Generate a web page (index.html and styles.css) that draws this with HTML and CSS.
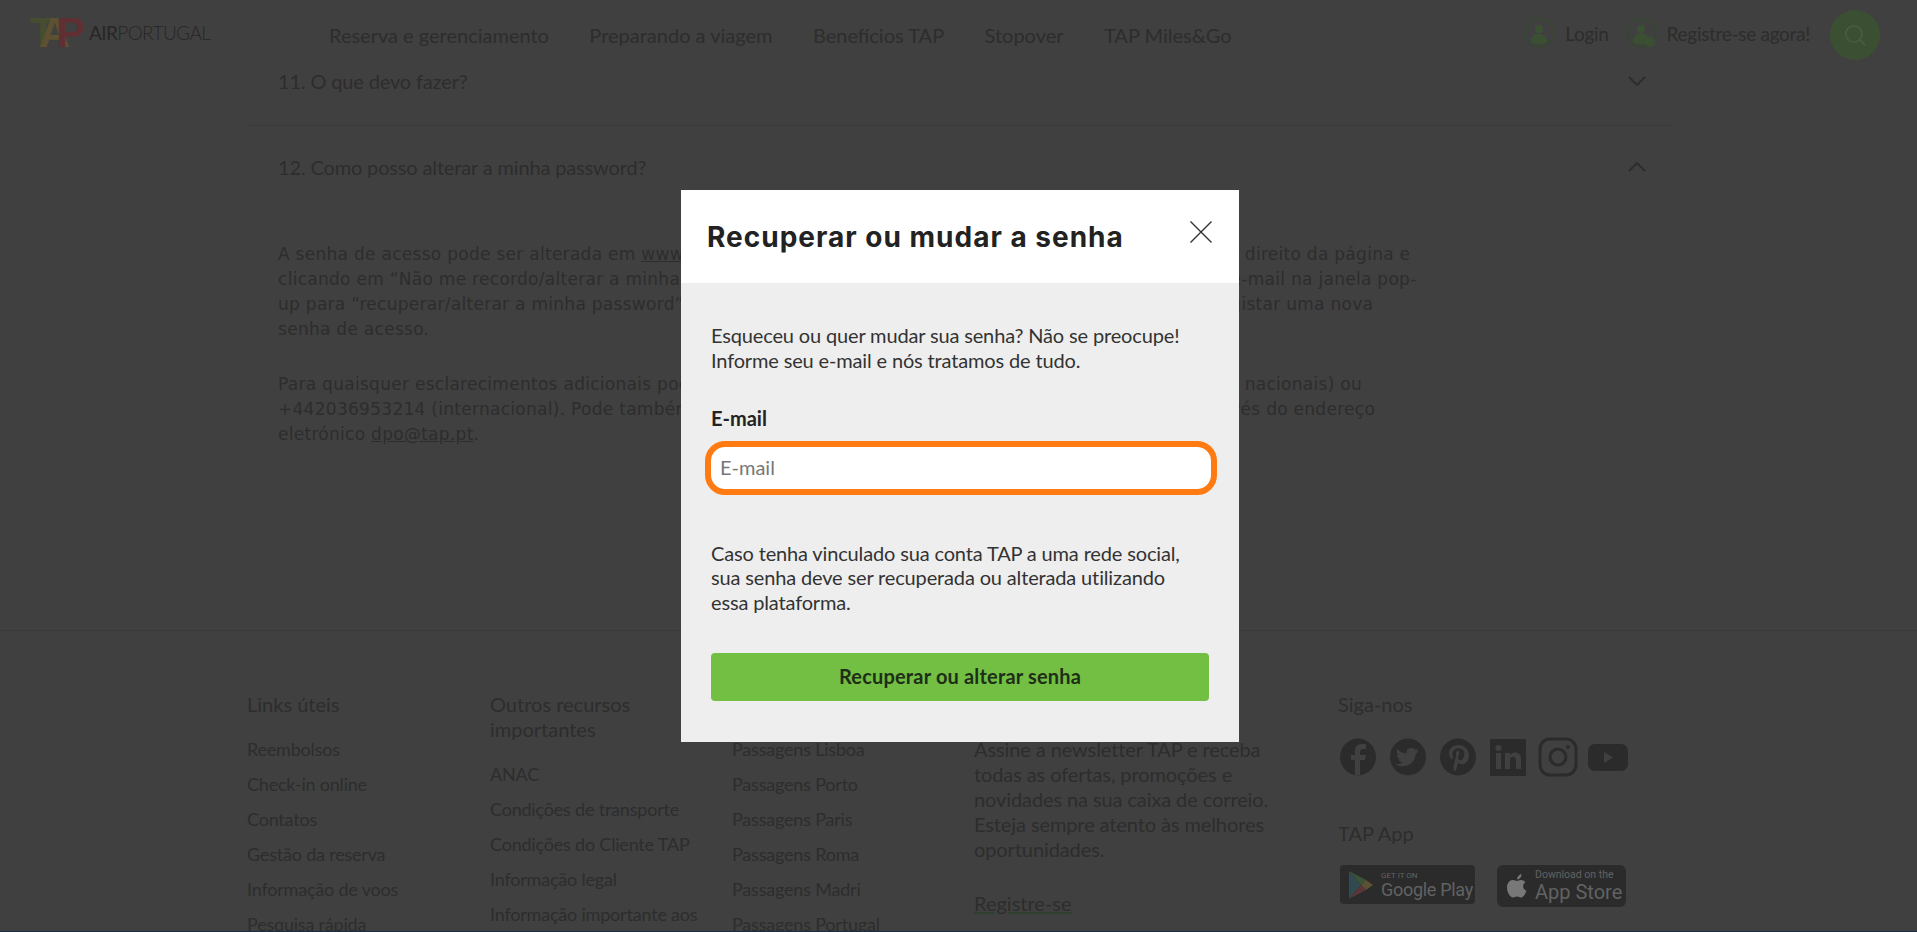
FILE: index.html
```html
<!DOCTYPE html>
<html>
  <head>
    <meta charset="utf-8" />
    <link rel="stylesheet" href="styles.css">
  </head>
  <body>
    <div class="page">
      <div class="header">
        <div class="logo">
          <div class="logo-mark"><span class="logo-t">T</span><span class="logo-a">A</span><span class="logo-p">P</span></div>
          <div class="logo-text"><b>AIR</b>PORTUGAL</div>
        </div>
        <div class="nav">
          <span>Reserva e gerenciamento</span>
          <span>Preparando a viagem</span>
          <span>Benefícios TAP</span>
          <span>Stopover</span>
          <span>TAP Miles&amp;Go</span>
        </div>
        <div class="user-links">
          <div class="user-link">
            <svg class="user-icon" viewBox="0 0 30 30">
              <circle cx="15" cy="15" r="14.2" fill="none" stroke="#35482f" stroke-width="1.4" />
              <circle cx="15" cy="11" r="4" fill="#3b5033" />
              <path d="M7 24c0-6 3-8 8-8s8 2 8 8c-2 3-14 3-16 0z" fill="#3b5033" />
            </svg>
            <span>Login</span>
          </div>
          <div class="user-link">
            <svg class="user-icon" viewBox="0 0 30 30">
              <circle cx="15" cy="15" r="14.2" fill="none" stroke="#35482f" stroke-width="1.4" />
              <circle cx="15" cy="11" r="4" fill="#3b5033" />
              <path d="M7 24c0-6 3-8 8-8s8 2 8 8c-2 3-14 3-16 0z" fill="#3b5033" />
              <circle cx="24" cy="24" r="5" fill="#3b5033" />
            </svg>
            <span>Registre-se agora!</span>
          </div>
        </div>
        <div class="search-btn">
          <svg viewBox="0 0 24 24" width="26" height="26" fill="none" stroke="#4c6144" stroke-width="1.2">
            <circle cx="11" cy="11" r="7.5" />
            <path d="M16.5 16.5l5 5" />
          </svg>
        </div>
      </div>

      <div class="faq">
        <div class="faq-row faq-row-first">
          <span>11. O que devo fazer?</span>
          <svg class="chevron" viewBox="0 0 18 10"><path d="M1 1l8 8 8-8" /></svg>
        </div>
        <div class="faq-row faq-row-open">
          <span>12. Como posso alterar a minha password?</span>
          <svg class="chevron" viewBox="0 0 18 10"><path d="M1 9l8-8 8 8" /></svg>
        </div>
        <div class="faq-answer">
          <p>
            A senha de acesso pode ser alterada em <u>www.flytap.com/pt-pt</u>, acedendo ao botão “Login” no canto superior direito da página e<br>
            clicando em “Não me recordo/alterar a minha password”, introduzindo no campo o seu endereço de correio e-mail na janela pop-<br>
            up para “recuperar/alterar a minha password”. Receberá depois um e-mail, com as instruções para poder registar uma nova<br>
            senha de acesso.
          </p>
          <p>
            Para quaisquer esclarecimentos adicionais poderá contactar o nosso Contact Center - 707205700 (chamadas nacionais) ou<br>
            +442036953214 (internacional). Pode também contactar o Encarregado de Proteção de Dados da TAP - através do endereço<br>
            eletrónico <u>dpo@tap.pt</u>.
          </p>
        </div>
      </div>

      <div class="footer">
        <div class="footer-col">
          <div class="footer-title">Links úteis</div>
          <div class="footer-link">Reembolsos</div>
          <div class="footer-link">Check-in online</div>
          <div class="footer-link">Contatos</div>
          <div class="footer-link">Gestão da reserva</div>
          <div class="footer-link">Informação de voos</div>
          <div class="footer-link">Pesquisa rápida</div>
        </div>
        <div class="footer-col">
          <div class="footer-title">Outros recursos importantes</div>
          <div class="footer-link">ANAC</div>
          <div class="footer-link">Condições de transporte</div>
          <div class="footer-link">Condições do Cliente TAP</div>
          <div class="footer-link">Informação legal</div>
          <div class="footer-link">Informação importante aos</div>
        </div>
        <div class="footer-col">
          <div class="footer-title">Passagens aéreas</div>
          <div class="footer-link">Passagens Lisboa</div>
          <div class="footer-link">Passagens Porto</div>
          <div class="footer-link">Passagens Paris</div>
          <div class="footer-link">Passagens Roma</div>
          <div class="footer-link">Passagens Madri</div>
          <div class="footer-link">Passagens Portugal</div>
        </div>
        <div class="footer-col">
          <div class="footer-title">Newsletter</div>
          <div class="newsletter">
            Assine a newsletter TAP e receba<br>
            todas as ofertas, promoções e<br>
            novidades na sua caixa de correio.<br>
            Esteja sempre atento às melhores<br>
            oportunidades.
          </div>
          <div class="newsletter-link">Registre-se</div>
        </div>
        <div class="footer-col footer-col-social">
          <div class="footer-title">Siga-nos</div>
          <div class="social">
            <svg viewBox="0 0 36 38" width="36" height="38">
              <ellipse cx="18" cy="19" rx="18" ry="18.5" fill="#2b2b2b" />
              <path d="M20 37V22h5l1-5h-6v-3c0-2 1-3 3-3h3V6h-4c-5 0-7 3-7 7v4h-4v5h4v15z" fill="#404040" />
            </svg>
            <svg viewBox="0 0 36 38" width="36" height="38">
              <ellipse cx="18" cy="19" rx="18" ry="18.5" fill="#2b2b2b" />
              <path d="M28 12c-1 .5-2 .7-2.600.8 1-.6 1.600-1.500 2-2.500-.9.500-1.900.9-2.900 1.100a4.600 4.600 0 0 0-7.900 4.200c-3.800-.2-7.200-2-9.400-4.800-1.200 2.100-.6 4.800 1.400 6.200-.7 0-1.400-.2-2-.6 0 2.200 1.600 4.200 3.700 4.600-.7.200-1.400.2-2.100.1.600 1.900 2.300 3.200 4.300 3.200a9.300 9.300 0 0 1-6.800 1.900c7.200 4.600 18.800 1.500 20-10 1-.7 1.800-1.500 2.300-2.400z" fill="#404040" />
            </svg>
            <svg viewBox="0 0 36 38" width="36" height="38">
              <ellipse cx="18" cy="19" rx="18" ry="18.5" fill="#2b2b2b" />
              <path d="M18.500 7c-6 0-9.500 4-9.500 8.500 0 2.500 1.300 5 3.300 5.700.7.200.9-1 .9-1.500-2.500-4 .2-9.500 5-9.500 4.500 0 6.700 3 6 7-.5 3-2 5-4 5-1.500 0-2.500-1.200-2.100-2.600l1.300-5c.4-1.800-2-3-3.200-.7-.5 1-.4 2.300 0 3.300l-2.500 10.500c-.2 1.500 0 3.500.2 5.300l1 .5c1-1.300 2-4 2.500-6l.8-3c1 1.300 2.300 1.800 3.800 1.800 4 0 7-4 7-9.500C28 10.500 24 7 18.500 7z" fill="#404040" />
            </svg>
            <svg viewBox="0 0 36 38" width="36" height="38">
              <rect width="36" height="37" y="1" fill="#2b2b2b" />
              <rect x="6" y="15" width="5" height="16" fill="#404040" />
              <circle cx="8.500" cy="10" r="3" fill="#404040" />
              <path d="M15 15h5v2.500c1-1.800 2.800-2.900 5-2.900 4 0 6 2.400 6 7V31h-5v-8.500c0-2.500-.9-3.700-2.800-3.700-2 0-3.200 1.300-3.200 3.700V31h-5z" fill="#404040" />
            </svg>
            <svg class="social-insta" viewBox="0 0 40 40" width="40" height="40">
              <rect x="2" y="2" width="36" height="36" rx="10" fill="none" stroke="#2b2b2b" stroke-width="3" />
              <circle cx="20" cy="20" r="8" fill="none" stroke="#2b2b2b" stroke-width="3" />
              <circle cx="30" cy="10" r="2" fill="#2b2b2b" />
            </svg>
            <svg viewBox="0 0 40 27" width="40" height="27">
              <rect width="40" height="27" rx="7" fill="#2b2b2b" />
              <path d="M16 8l9 5.500-9 5.500z" fill="#404040" />
            </svg>
          </div>
          <div class="footer-title app-title">TAP App</div>
          <div class="badges">
            <div class="badge badge-google">
              <svg viewBox="0 0 24 28" width="24" height="28">
                <path d="M0 0l12 14L0 28z" fill="#2f4a50" />
                <path d="M0 0l17 9-5 5z" fill="#3a5238" />
                <path d="M17 9l7 5-7 5-5-5z" fill="#5a5233" />
                <path d="M0 28l17-9-5-5z" fill="#5a3638" />
              </svg>
              <div class="badge-text">
                <span class="badge-small">GET IT ON</span>
                <span class="badge-big">Google Play</span>
              </div>
            </div>
            <div class="badge badge-apple">
              <svg viewBox="0 0 20 24" width="20" height="24">
                <path d="M14 6c2 0 3.500 1 4.500 2.300-3.500 2-3 7 .9 8.500-1 3-3 6.700-5.400 6.700-1.500 0-2.300-1-4-1s-2.500 1-4 1C3 23.500 0 18 0 13.500 0 8.500 3 6 6 6c1.600 0 3 1 4 1s2.400-1 4-1z" fill="#787878" />
                <path d="M10 5.500C10 3 12 .5 14.500 0c.3 2.700-2 5.500-4.500 5.500z" fill="#787878" />
              </svg>
              <div class="badge-text">
                <span class="badge-small-apple">Download on the</span>
                <span class="badge-big-apple">App Store</span>
              </div>
            </div>
          </div>
        </div>
      </div>
    </div>

    <div class="modal">
      <div class="modal-head">
        <div class="modal-title">Recuperar ou mudar a senha</div>
        <svg class="modal-close" viewBox="0 0 22 22" width="22" height="22">
          <path d="M0.500 0.500l21 21M21.500 0.500l-21 21" />
        </svg>
      </div>
      <div class="modal-body">
        <p class="modal-text">Esqueceu ou quer mudar sua senha? Não se preocupe!<br>Informe seu e-mail e nós tratamos de tudo.</p>
        <label class="modal-label">E-mail</label>
        <input class="modal-input" type="text" placeholder="E-mail">
        <p class="modal-text modal-note">Caso tenha vinculado sua conta TAP a uma rede social,<br>sua senha deve ser recuperada ou alterada utilizando<br>essa plataforma.</p>
        <button class="modal-button">Recuperar ou alterar senha</button>
      </div>
    </div>
  </body>
</html>
```

FILE: styles.css
```css
html,
body {
  height: 100%;
}

body {
  margin: 0;
  overflow: hidden;
  background: #404040;
  color: #2d2d2d;
  font-family: Lato, sans-serif;
}

.page {
  height: 931px;
  overflow: hidden;
  border-bottom: 1px solid #1c2a40;
}

.header {
  display: flex;
  align-items: center;
  height: 70px;
  margin-bottom: -1px;
  padding-left: 30px;
  padding-right: 37px;
}

.logo {
  display: flex;
  align-items: center;
  width: 299px;
  margin-top: -6px;
}

.logo-mark {
  font-family: "Liberation Sans", sans-serif;
  font-weight: bold;
  font-size: 43px;
  line-height: 34px;
  letter-spacing: -14px;
  width: 59px;
}

.logo-t {
  color: #474d2f;
}

.logo-a {
  color: #5d5132;
}

.logo-p {
  color: #5f2f33;
}

.logo-text {
  font-size: 19px;
  font-weight: 300;
  letter-spacing: -0.6px;
  color: #262626;
}

.logo-text b {
  font-weight: 400;
}

.nav {
  display: flex;
  gap: 40.4px;
  font-size: 20px;
  flex: 1;
}

.user-links {
  display: flex;
  gap: 17px;
  font-size: 19px;
  letter-spacing: -0.3px;
  margin-right: 20px;
  margin-top: -4px;
}

.user-link {
  display: flex;
  align-items: center;
  gap: 11px;
}

.user-icon {
  width: 30px;
  height: 32px;
}

.search-btn {
  display: flex;
  align-items: center;
  justify-content: center;
  width: 50px;
  height: 50px;
  border-radius: 50%;
  background: #3b5033;
}

.faq {
  height: 561px;
  box-sizing: border-box;
  padding: 0 245px 0 248px;
}

.faq-row {
  display: flex;
  justify-content: space-between;
  align-items: center;
  padding: 29px 26px 31px 30px;
  font-size: 20px;
  line-height: 24px;
  letter-spacing: -0.15px;
  border-bottom: 1px solid #3a3a3a;
}

.faq-row-first {
  padding-top: 0;
  padding-bottom: 32px;
}

.faq-row-open {
  border-bottom: none;
}

.chevron {
  width: 18px;
  height: 10px;
  fill: none;
  stroke: #2d2d2d;
  stroke-width: 2;
}

.faq-answer {
  padding: 32px 0 0 30px;
  font-family: "DejaVu Sans", sans-serif;
  font-size: 17px;
  letter-spacing: 0.28px;
  line-height: 25px;
}

.faq-answer p {
  margin: 0 0 30px;
  white-space: nowrap;
}

.footer {
  display: grid;
  grid-template-columns: 243px 242px 242px 364px 1fr;
  padding: 62px 0 0 247px;
  border-top: 1px solid #3a3a3a;
}

.footer-col {
  padding-right: 30px;
}

.footer-title {
  font-size: 20px;
  line-height: 25px;
  margin-top: -1px;
  margin-bottom: 20px;
}

.footer-link {
  font-size: 18px;
  line-height: 25px;
  letter-spacing: -0.2px;
  margin-bottom: 10px;
  white-space: nowrap;
}

.newsletter {
  font-size: 20px;
  line-height: 25px;
  letter-spacing: -0.1px;
  white-space: nowrap;
}

.newsletter-link {
  font-size: 20px;
  line-height: 25px;
  margin-top: 29px;
  text-decoration: underline;
  text-decoration-color: #2f4030;
}

.social {
  display: flex;
  align-items: center;
  gap: 14px;
  margin-left: 2px;
}

.social-insta {
  margin-left: -2px;
  margin-right: -4px;
}

.app-title {
  margin-top: 44px;
  margin-bottom: 19px;
}

.badges {
  display: flex;
  align-items: flex-start;
  gap: 22px;
  margin-left: 2px;
}

.badge {
  display: flex;
  align-items: center;
  gap: 8px;
  background: #2b2b2b;
  border-radius: 4px;
  color: #626262;
  font-family: Roboto, sans-serif;
}

.badge-google {
  width: 135px;
  height: 39px;
  padding-left: 9px;
  box-sizing: border-box;
}

.badge-apple {
  width: 129px;
  height: 42px;
  padding-left: 10px;
  box-sizing: border-box;
  border-radius: 6px;
}

.badge-text {
  display: flex;
  flex-direction: column;
}

.badge-small {
  font-size: 8px;
  line-height: 9px;
}

.badge-big {
  font-size: 18px;
  line-height: 19px;
  letter-spacing: -0.3px;
}

.badge-small-apple {
  font-size: 10.500px;
  line-height: 12px;
}

.badge-big-apple {
  font-size: 20px;
  line-height: 22px;
}

.modal {
  position: fixed;
  top: 190px;
  left: 681px;
  width: 558px;
  height: 552px;
  background: #eeeeee;
}

.modal-head {
  display: flex;
  justify-content: space-between;
  align-items: flex-start;
  height: 93px;
  box-sizing: border-box;
  padding: 31px 27px 0 26px;
  background: #fff;
}

.modal-title {
  font-family: Inter, sans-serif;
  font-weight: 700;
  font-size: 28px;
  letter-spacing: 1px;
  line-height: 32px;
  color: #222;
}

.modal-close {
  margin-bottom: auto;
  fill: none;
  stroke: #333;
  stroke-width: 1.400;
}

.modal-body {
  padding: 40px 30px 0;
}

.modal-text {
  margin: 0;
  font-size: 20px;
  letter-spacing: -0.15px;
  line-height: 24.500px;
  color: #333;
}

.modal-label {
  display: block;
  margin-top: 34px;
  font-size: 20px;
  font-weight: 700;
  line-height: 24px;
  color: #222;
}

.modal-input {
  display: block;
  box-sizing: border-box;
  width: 500px;
  height: 42px;
  margin-top: 17px;
  padding: 0 9px 3px;
  border: none;
  border-radius: 14px;
  outline: 6px solid #ff7a10;
  outline-offset: 0;
  background: #fff;
  font-family: Lato, sans-serif;
  font-size: 20px;
}

.modal-input::placeholder {
  color: #777;
}

.modal-note {
  margin-top: 51.5px;
}

.modal-button {
  display: block;
  width: 498px;
  height: 48px;
  margin-top: 39px;
  padding: 0 0 2px;
  border: none;
  border-radius: 4px;
  background: #72bf44;
  font-family: Lato, sans-serif;
  font-size: 20px;
  letter-spacing: 0.17px;
  font-weight: 700;
  color: #1f2e17;
}
```
